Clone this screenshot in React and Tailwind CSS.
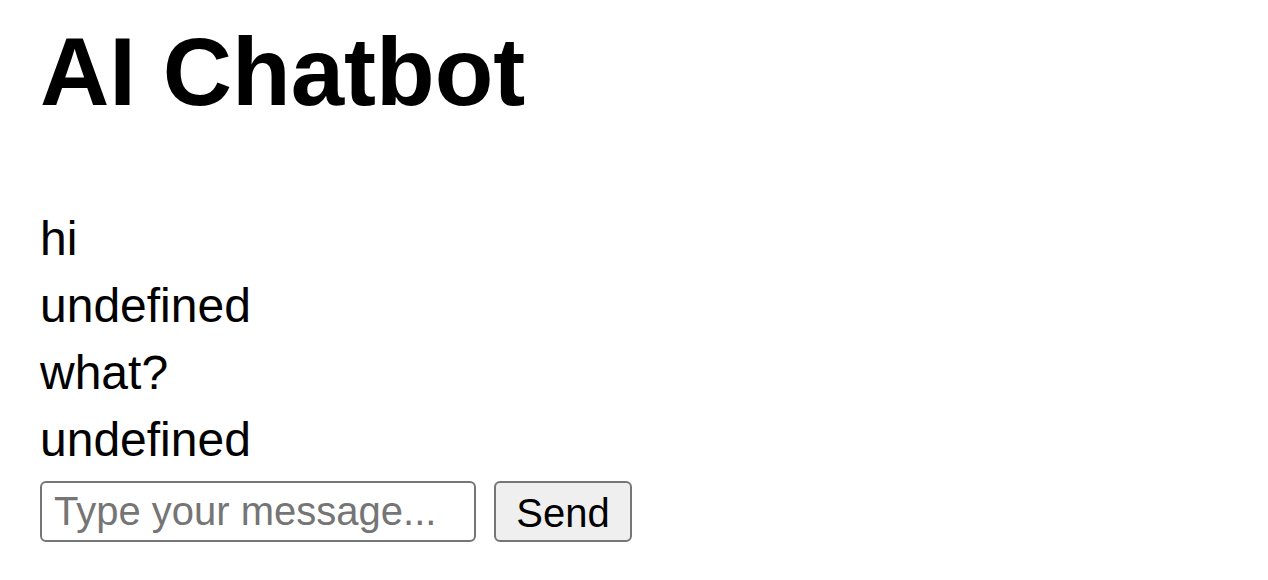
import { useState } from "react";

export default function App() {
  const [messages, setMessages] = useState(["hi", undefined, "what?", undefined]);
  const [input, setInput] = useState("");

  const send = () => {
    if (!input) return;
    setMessages([...messages, input, undefined]);
    setInput("");
  };

  return (
    <div className="min-h-screen bg-white px-[40px] pt-[24px] text-black font-['Liberation_Sans',Arial,sans-serif]">
      <h1 className="text-[96px] leading-[96px] font-bold">AI Chatbot</h1>

      {/* Chat log */}
      <div className="mt-[85px]">
        {messages.map((m, i) => (
          <div key={i} className="text-[48px] leading-[67px]">
            {String(m)}
          </div>
        ))}
      </div>

      {/* Input row */}
      <div className="mt-[8px] flex items-center gap-[18px]">
        <input
          className="w-[436px] h-[61px] border-2 border-[#767676] rounded-[6px] px-[12px] text-[40px] text-black placeholder:text-[#757575] outline-none"
          placeholder="Type your message..."
          value={input}
          onChange={(e) => setInput(e.target.value)}
        />
        <button
          className="w-[138px] h-[61px] border-2 border-[#767676] rounded-[6px] bg-[#efefef] text-[40px] text-black"
          onClick={send}
        >
          Send
        </button>
      </div>
    </div>
  );
}
